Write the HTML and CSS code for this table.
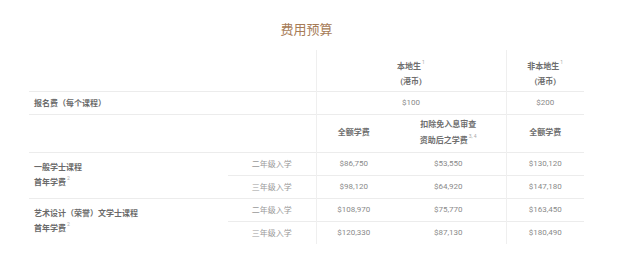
FILE: index.html
```html
<!DOCTYPE html>
<html lang="zh-CN">
<head>
<meta charset="utf-8">
<link rel="stylesheet" href="styles.css">
</head>
<body>
<div class="wrap">
  <h2 class="title">费用预算</h2>
  <table class="fees">
    <colgroup>
      <col class="c1"><col class="c2"><col class="c3"><col class="c4"><col class="c5">
    </colgroup>
    <tr class="head1">
      <td colspan="2"></td>
      <th colspan="2" class="vl">本地生<sup>1</sup><br>(港币)</th>
      <th class="vl">非本地生<sup>1</sup><br>(港币)</th>
    </tr>
    <tr class="row line">
      <td colspan="2" class="label">报名费（每个课程）</td>
      <td colspan="2" class="vl num">$100</td>
      <td class="vl num">$200</td>
    </tr>
    <tr class="head2 line">
      <td colspan="2"></td>
      <th class="vl">全额学费</th>
      <th>扣除免入息审查<br>资助后之学费<sup>3, 4</sup></th>
      <th class="vl">全额学费</th>
    </tr>
    <tr class="row line">
      <td rowspan="2" class="label group">一般学士课程<br>首年学费<sup>2</sup></td>
      <td class="entry">二年级入学</td>
      <td class="vl num">$86,750</td>
      <td class="num">$53,550</td>
      <td class="vl num">$130,120</td>
    </tr>
    <tr class="row sub">
      <td class="entry">三年级入学</td>
      <td class="vl num">$98,120</td>
      <td class="num">$64,920</td>
      <td class="vl num">$147,180</td>
    </tr>
    <tr class="row line">
      <td rowspan="2" class="label group">艺术设计（荣誉）文学士课程<br>首年学费<sup>2</sup></td>
      <td class="entry">二年级入学</td>
      <td class="vl num">$108,970</td>
      <td class="num">$75,770</td>
      <td class="vl num">$163,450</td>
    </tr>
    <tr class="row sub">
      <td class="entry">三年级入学</td>
      <td class="vl num">$120,330</td>
      <td class="num">$87,130</td>
      <td class="vl num">$180,490</td>
    </tr>
  </table>
</div>
</body>
</html>
```

FILE: styles.css
```css
html, body {
  margin: 0;
  padding: 0;
  background: #ffffff;
}
body {
  font-family: Roboto, "Noto Sans CJK SC", sans-serif;
  color: #888;
}
.wrap {
  width: 555px;
  margin-left: 29px;
  padding-top: 20px;
}
.title {
  margin: 0;
  height: 30px;
  line-height: 20px;
  text-align: center;
  font-size: 13px;
  font-weight: 400;
  color: #a77c57;
}
.fees {
  width: 555px;
  table-layout: fixed;
  border-collapse: collapse;
  font-size: 8px;
}
.c1 { width: 199px; }
.c2 { width: 88px; }
.c3 { width: 75px; }
.c4 { width: 115px; }
.c5 { width: 78px; }
.fees td, .fees th {
  padding: 0;
  text-align: center;
  vertical-align: middle;
}
.fees th {
  font-weight: 700;
  color: #6e6e6e;
  line-height: 16px;
}
.vl { border-left: 1px solid #efefef; }
.line > td, .line > th { border-top: 1px solid #ececec; }
.sub > td { border-top: 1px solid #ececec; }
.head1 { height: 41px; }
.head1 th { padding-top: 7px; line-height: 15px; }
.head2 { height: 38px; }
.row { height: 23px; }
.label {
  text-align: left !important;
  padding-left: 5px !important;
  font-weight: 700;
  color: #6a6a6a;
}
.group { line-height: 15px; }
.entry { color: #9a9a9a; }
.num { color: #8a8a8a; }
sup {
  font-size: 5px;
  line-height: 0;
  font-weight: 400;
  color: #aaa;
  vertical-align: top;
  position: relative;
  top: 3px;
  margin-left: 1px;
}
```
